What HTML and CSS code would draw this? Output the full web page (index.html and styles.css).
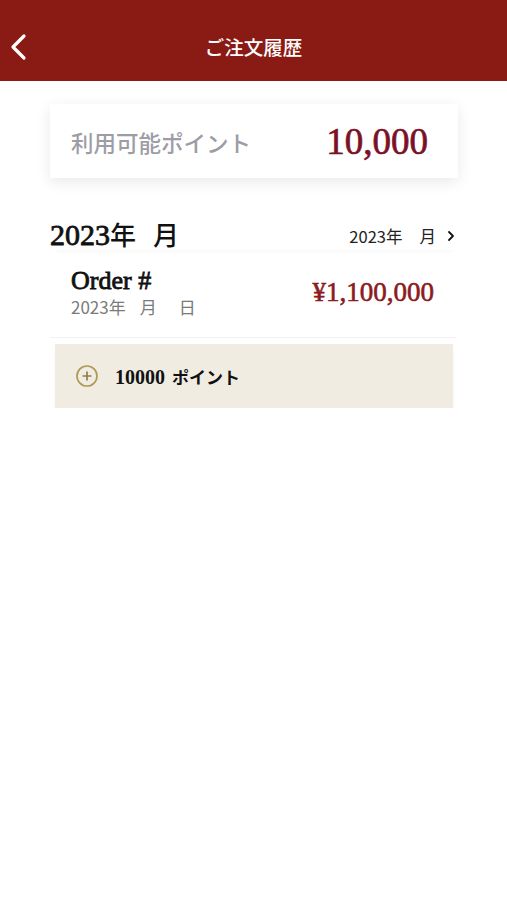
FILE: index.html
```html
<!DOCTYPE html>
<html lang="ja">
<head>
<meta charset="utf-8">
<title>ご注文履歴</title>
<link rel="stylesheet" href="styles.css">
</head>
<body>
<header class="topbar">
  <button class="back" aria-label="戻る">
    <svg width="20" height="28" viewBox="0 0 20 28"><path d="M15 3 L4 14 L15 25" fill="none" stroke="#fff" stroke-width="3.2" stroke-linecap="round" stroke-linejoin="round"/></svg>
  </button>
  <h1 class="title">ご注文履歴</h1>
</header>
<main class="content">
  <section class="points-card">
    <span class="points-label">利用可能ポイント</span>
    <span class="points-value">10,000</span>
  </section>
  <div class="month-head">
    <span class="month-title">2023<span class="cjk">年</span><span class="gap-m"></span><span class="cjk">月</span></span>
    <span class="month-link">2023年<span class="gap-s"></span>月
      <svg class="chev" width="10" height="12" viewBox="0 0 10 12"><path d="M3 2 L7 6 L3 10" fill="none" stroke="#111" stroke-width="1.8" stroke-linecap="round" stroke-linejoin="round"/></svg>
    </span>
  </div>
  <div class="order-row">
    <div class="order-info">
      <span class="order-no">Order #</span>
      <span class="order-date">2023年<span class="gap-d1"></span>月<span class="gap-d2"></span>日</span>
    </div>
    <span class="order-price">¥1,100,000</span>
  </div>
  <div class="point-box">
    <svg class="plus" width="24" height="24" viewBox="0 0 24 24"><circle cx="12" cy="12" r="10" fill="none" stroke="#ad9a55" stroke-width="1.7"/><path d="M12 7.5 V16.5 M7.5 12 H16.5" stroke="#8e7f45" stroke-width="1.7"/></svg>
    <span class="point-text">10000 <span class="kana">ポイント</span></span>
  </div>
</main>
</body>
</html>
```
FILE: styles.css
```css
* { box-sizing: border-box; }
html, body { margin: 0; padding: 0; background: #fff; }
body {
  font-family: "Liberation Serif", "Noto Sans CJK JP", serif;
  color: #111;
  width: 507px;
}
.topbar {
  height: 81px;
  background: #8a1a14;
  display: flex;
  align-items: center;
  justify-content: center;
  position: relative;
}
.back {
  position: absolute;
  left: 9px;
  top: 33px;
  border: 0;
  background: none;
  padding: 0;
  display: flex;
}
.title {
  margin: 0;
  padding-top: 12px;
  color: #fff;
  font-size: 19.5px;
  font-weight: 500;
}
.content {
  padding: 23px 49px 0 50px;
  display: flex;
  flex-direction: column;
}
.points-card {
  height: 74px;
  background: #fff;
  box-shadow: 0 4px 14px rgba(0,0,0,0.09);
  display: flex;
  align-items: center;
  justify-content: space-between;
  padding: 0 30px 0 21px;
}
.points-label {
  font-size: 22.5px;
  color: #9d9da5;
  font-weight: 500;
  padding-top: 2px;
}
.points-value {
  font-size: 37px;
  color: #7b1127;
  font-weight: 400;
  -webkit-text-stroke: 0.7px #7b1127;
}
.month-head {
  margin-top: 38px;
  height: 34px;
  display: flex;
  align-items: center;
  justify-content: space-between;
  box-shadow: 0 6px 6px -6px rgba(0,0,0,0.06);
}
.month-title {
  font-size: 30px;
  font-weight: 400;
  -webkit-text-stroke: 0.8px #111;
  color: #111;
  display: flex;
  align-items: baseline;
}
.month-title .cjk {
  font-size: 26px;
  font-weight: 500;
  -webkit-text-stroke: 0;
}
.gap-m { display: inline-block; width: 17px; }
.month-link {
  font-family: "Noto Sans CJK JP", sans-serif;
  font-size: 16.5px;
  color: #222;
  display: flex;
  align-items: center;
  padding-right: 2px;
  padding-top: 6px;
}
.gap-s { display: inline-block; width: 17px; }
.chev { margin-left: 10px; }
.order-row {
  display: flex;
  align-items: center;
  justify-content: space-between;
  padding: 16px 22px 19px 21px;
  border-bottom: 1px solid #f1f1f4;
  margin: 0 2px 0 0;
}
.order-info {
  display: flex;
  flex-direction: column;
}
.order-no {
  font-size: 26px;
  font-weight: 400;
  -webkit-text-stroke: 0.8px #111;
  line-height: 30px;
  color: #111;
}
.order-date {
  font-family: "Noto Sans CJK JP", sans-serif;
  font-size: 17px;
  color: #7a7a7a;
  line-height: 22px;
  display: flex;
}
.gap-d1 { display: inline-block; width: 14px; }
.gap-d2 { display: inline-block; width: 22px; }
.order-price {
  font-size: 27px;
  font-weight: 400;
  -webkit-text-stroke: 0.6px #8a1b1e;
  color: #8a1b1e;
}
.point-box {
  margin: 6px 5px 0 5px;
  height: 64px;
  background: #f0ece2;
  display: flex;
  align-items: center;
  padding-left: 20px;
  gap: 16px;
  box-shadow: 0 3px 4px rgba(0,0,0,0.04);
}
.point-text {
  font-size: 20px;
  font-weight: 700;
  color: #111;
}
.kana {
  font-size: 17px;
  margin-left: 2px;
}
```
